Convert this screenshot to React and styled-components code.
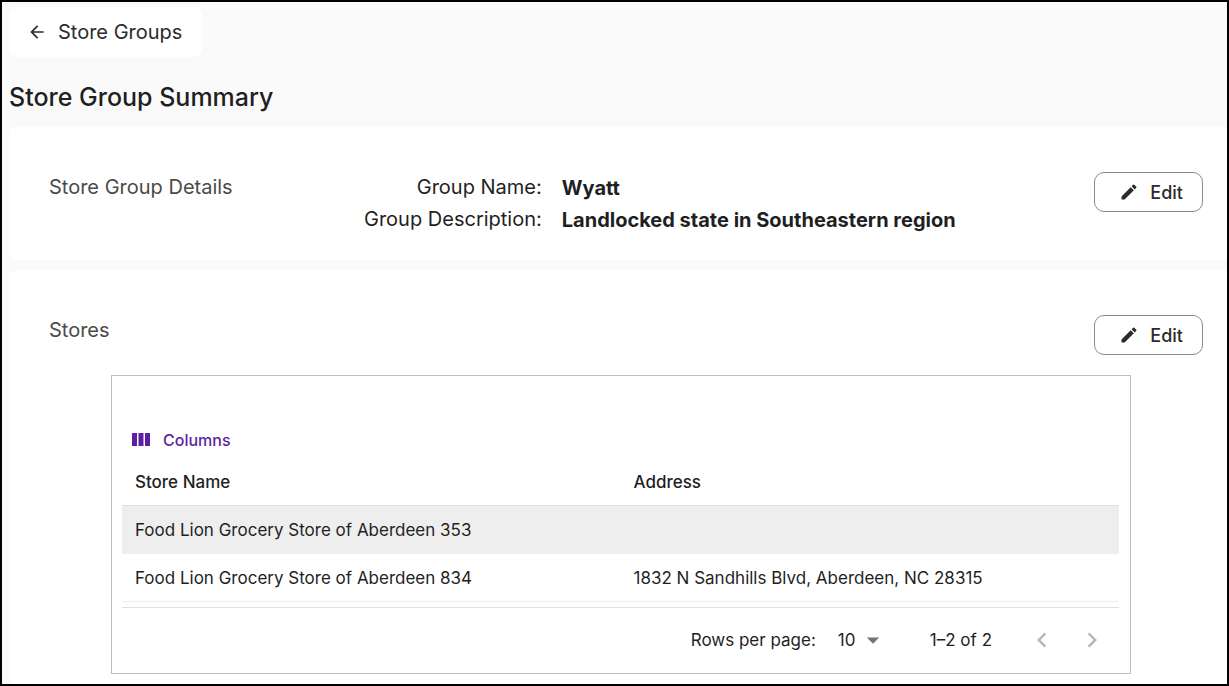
import React, { useState } from "react";
import styled, { createGlobalStyle } from "styled-components";
import {
  MdArrowBack,
  MdArrowDropDown,
  MdChevronLeft,
  MdChevronRight,
  MdEdit,
} from "react-icons/md";

const colors = {
  page: "#fafafa",
  text: "#1f1f1f",
  muted: "#4a4a4a",
  border: "#bdbdbd",
  line: "#e0e0e0",
  stripe: "#eeeeee",
  accent: "#5b1fa0",
};

const GlobalStyle = createGlobalStyle`
  * {
    box-sizing: border-box;
  }
  body {
    margin: 0;
    background: ${colors.page};
    color: ${colors.text};
    font-family: Inter, "Liberation Sans", sans-serif;
  }
  button, select {
    font: inherit;
    color: inherit;
  }
`;

const Page = styled.div`
  display: flex;
  flex-direction: column;
  min-height: 100vh;
  border: 2px solid black;
  padding: 5px 0 0 7px;
`;

const BackLink = styled.a`
  display: flex;
  align-items: center;
  align-self: flex-start;
  gap: 11px;
  height: 50px;
  padding: 0 20px 0 18px;
  border-radius: 8px;
  background: white;
  color: #2b2b2b;
  font-size: 20px;
  text-decoration: none;
`;

const PageTitle = styled.h1`
  margin: 24px 0 14px;
  font-size: 25px;
  font-weight: 500;
  line-height: 32px;
`;

const Card = styled.section`
  background: white;
  border-radius: 8px 0 0 8px;
  padding: 45px 24px 10px 40px;
  flex-grow: ${({ $fill }) => ($fill ? 1 : 0)};

  & + & {
    margin-top: 10px;
  }
`;

const CardHeader = styled.div`
  display: flex;
  align-items: flex-start;
`;

const CardTitle = styled.h2`
  flex: 0 0 315px;
  margin: 0;
  color: ${colors.muted};
  font-size: 20px;
  font-weight: 400;
  line-height: 30px;
`;

const Details = styled.dl`
  display: grid;
  grid-template-columns: auto 1fr;
  column-gap: 20px;
  flex: 1;
  margin: 0 0 14px;
  font-size: 20px;
  line-height: 32px;
`;

const Term = styled.dt`
  line-height: 30px;
  text-align: right;
`;

const Value = styled.dd`
  margin: 0;
  font-weight: 700;
`;

const EditButton = styled.button`
  display: flex;
  align-items: center;
  gap: 11px;
  height: 40px;
  margin-left: auto;
  padding: 0 19px 0 24px;
  border: 1px solid #8c8c8c;
  border-radius: 10px;
  background: white;
  color: #2b2b2b;
  font-size: 18px;
  font-weight: 500;
  cursor: pointer;
`;

const TableBox = styled.div`
  margin: 20px 72px 0 62px;
  padding: 48px 11px 0 10px;
  border: 1px solid ${colors.border};
`;

const ColumnsButton = styled.button`
  display: flex;
  align-items: center;
  gap: 12px;
  height: 32px;
  padding: 0 10px;
  border: none;
  background: none;
  color: ${colors.accent};
  font-size: 16px;
  font-weight: 500;
  cursor: pointer;
`;

const Table = styled.table`
  width: 100%;
  table-layout: fixed;
  border-collapse: collapse;
  font-size: 17px;
`;

const HeadCell = styled.th`
  height: 49px;
  padding: 4px 13px 0;
  border-bottom: 1px solid ${colors.line};
  font-weight: 500;
  text-align: left;
`;

const Row = styled.tr`
  height: 48px;
  border-bottom: 1px solid ${colors.stripe};

  &:nth-child(odd) {
    background: ${colors.stripe};
  }
`;

const Cell = styled.td`
  padding: 2px 13px 0;
`;

const Pagination = styled.div`
  display: flex;
  align-items: center;
  justify-content: flex-end;
  height: 66px;
  margin-top: 5px;
  border-top: 1px solid ${colors.line};
  font-size: 17px;
`;

const SelectWrap = styled.span`
  display: flex;
  align-items: center;
  margin: 0 42px 0 22px;
`;

const Select = styled.select`
  appearance: none;
  width: 46px;
  margin-right: -26px;
  padding: 0;
  border: none;
  background: none;
  cursor: pointer;
`;

const Caret = styled(MdArrowDropDown)`
  color: #757575;
  pointer-events: none;
`;

const PagerButtons = styled.div`
  display: flex;
  gap: 16px;
  margin-left: 33px;
  margin-right: 10px;
`;

const PagerButton = styled.button`
  display: flex;
  align-items: center;
  justify-content: center;
  width: 34px;
  height: 34px;
  padding: 0;
  border: none;
  background: none;
  color: #b8b8b8;
`;

const stores = [
  { name: "Food Lion Grocery Store of Aberdeen 353", address: "" },
  {
    name: "Food Lion Grocery Store of Aberdeen 834",
    address: "1832 N Sandhills Blvd, Aberdeen, NC 28315",
  },
];

const ColumnsIcon = () => (
  <svg width="19" height="14" viewBox="0 0 19 14" fill="currentColor" aria-hidden="true">
    <rect x="0" y="0" width="5" height="13" />
    <rect x="6.5" y="0" width="5" height="13" />
    <rect x="13" y="0" width="5" height="13" />
  </svg>
);

const Edit = ({ label }) => (
  <EditButton type="button" aria-label={label}>
    <MdEdit size={20} />
    Edit
  </EditButton>
);

const App = () => {
  const [pageSize, setPageSize] = useState("10");

  return (
    <>
      <GlobalStyle />
      <Page>
        <BackLink href="#">
          <MdArrowBack size={20} />
          Store Groups
        </BackLink>
        <PageTitle>Store Group Summary</PageTitle>

        <Card>
          <CardHeader>
            <CardTitle>Store Group Details</CardTitle>
            <Details>
              <Term>Group Name:</Term>
              <Value>Wyatt</Value>
              <Term>Group Description:</Term>
              <Value>Landlocked state in Southeastern region</Value>
            </Details>
            <Edit label="Edit store group details" />
          </CardHeader>
        </Card>

        <Card $fill>
          <CardHeader>
            <CardTitle>Stores</CardTitle>
            <Edit label="Edit stores" />
          </CardHeader>

          <TableBox>
            <ColumnsButton type="button">
              <ColumnsIcon />
              Columns
            </ColumnsButton>
            <Table>
              <thead>
                <tr>
                  <HeadCell>Store Name</HeadCell>
                  <HeadCell>Address</HeadCell>
                </tr>
              </thead>
              <tbody>
                {stores.map((store) => (
                  <Row key={store.name}>
                    <Cell>{store.name}</Cell>
                    <Cell>{store.address}</Cell>
                  </Row>
                ))}
              </tbody>
            </Table>
            <Pagination>
              <label htmlFor="page-size">Rows per page:</label>
              <SelectWrap>
                <Select
                  id="page-size"
                  value={pageSize}
                  onChange={(e) => setPageSize(e.target.value)}
                >
                  <option>10</option>
                  <option>25</option>
                  <option>50</option>
                </Select>
                <Caret size={30} />
              </SelectWrap>
              <span>1–2 of 2</span>
              <PagerButtons>
                <PagerButton type="button" aria-label="Previous page" disabled>
                  <MdChevronLeft size={30} />
                </PagerButton>
                <PagerButton type="button" aria-label="Next page" disabled>
                  <MdChevronRight size={30} />
                </PagerButton>
              </PagerButtons>
            </Pagination>
          </TableBox>
        </Card>
      </Page>
    </>
  );
};

export default App;
